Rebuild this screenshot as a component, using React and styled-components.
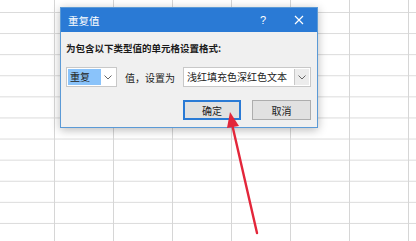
import React from "react";
import styled, { createGlobalStyle } from "styled-components";

const Global = createGlobalStyle`
    html, body {
        margin: 0;
        padding: 0;
        background: #ffffff;
    }
    body {
        font-family: "Noto Sans CJK SC", "Noto Sans", sans-serif;
    }
`;

const Sheet = styled.div`
    position: relative;
    width: 416px;
    height: 241px;
    overflow: hidden;
    background-color: #ffffff;
    background-image:
        linear-gradient(to right, #d6d6d6 1px, transparent 1px),
        linear-gradient(to bottom, #dadada 1px, transparent 1px);
    background-size: 59px 100%, 100% 21.1px;
    background-position: 54px 0, 0 12px;
`;

const Dialog = styled.div`
    position: absolute;
    left: 60px;
    top: 7px;
    width: 258px;
    height: 121px;
    box-sizing: border-box;
    border: 1px solid #5b9ad6;
    background: #f0f0f0;
    box-shadow: 0 2px 9px rgba(0, 0, 0, 0.28);
    display: flex;
    flex-direction: column;
`;

const TitleBar = styled.div`
    height: 24px;
    flex: none;
    background: #2a7ad5;
    color: #ffffff;
    display: flex;
    align-items: center;
    padding-left: 7px;
    font-size: 10.5px;
`;

const Title = styled.span`
    flex: 1;
`;

const TitleButton = styled.span`
    width: 36px;
    display: flex;
    justify-content: center;
    align-items: center;
    font-family: "Liberation Sans", sans-serif;
    font-size: 11px;
`;

const Body = styled.div`
    flex: 1;
    padding: 10px 6px 0 5px;
    display: flex;
    flex-direction: column;
`;

const Label = styled.div`
    font-size: 9.5px;
    font-weight: 700;
    color: #1a1a1a;
    line-height: 12px;
`;

const Row = styled.div`
    margin-top: 13px;
    display: flex;
    align-items: center;
`;

const Select = styled.div`
    width: ${(p) => p.$width}px;
    height: 20px;
    box-sizing: border-box;
    border: 1px solid #c8c8c8;
    background: #ffffff;
    display: flex;
    align-items: stretch;
    padding: 1px;
    font-size: 10px;
    color: #222222;
`;

const SelectValue = styled.span`
    flex: ${(p) => (p.$selected ? "none" : 1)};
    width: ${(p) => (p.$selected ? "31px" : "auto")};
    background: ${(p) => (p.$selected ? "#8ac3fa" : "transparent")};
    display: flex;
    align-items: center;
    padding-left: 2px;
    line-height: 1;
`;

const Arrow = styled.span`
    width: 15px;
    margin-left: auto;
    box-sizing: border-box;
    border-left: ${(p) => (p.$boxed ? "1px solid #c8c8c8" : "none")};
    background: ${(p) => (p.$boxed ? "#ececec" : "#ffffff")};
    display: flex;
    justify-content: center;
    align-items: center;
`;

const Text = styled.span`
    font-size: 10px;
    color: #222222;
    margin: 0 8px 0 8px;
    white-space: pre;
`;

const Buttons = styled.div`
    margin-top: 13px;
    display: flex;
    justify-content: flex-end;
    gap: 11px;
`;

const Button = styled.div`
    width: ${(p) => p.$width}px;
    height: 20px;
    box-sizing: border-box;
    border: ${(p) => (p.$primary ? "2px solid #2a7ad5" : "1px solid #adadad")};
    background: #e1e1e1;
    display: flex;
    justify-content: center;
    align-items: center;
    font-size: 10px;
    color: #222222;
`;

const Pointer = styled.svg`
    position: absolute;
    left: 0;
    top: 0;
`;

const Chevron = () => (
    <svg width="8" height="5" viewBox="0 0 8 5">
        <path d="M0.5 0.5 L4 4 L7.5 0.5" fill="none" stroke="#666" strokeWidth="1" />
    </svg>
);

const App = () => (
    <>
        <Global />
        <Sheet>
            <Dialog>
                <TitleBar>
                    <Title>重复值</Title>
                    <TitleButton>?</TitleButton>
                    <TitleButton>
                        <svg width="10" height="10" viewBox="0 0 10 10">
                            <path d="M1 1 L9 9 M9 1 L1 9" stroke="#fff" strokeWidth="1.2" />
                        </svg>
                    </TitleButton>
                </TitleBar>
                <Body>
                    <Label>为包含以下类型值的单元格设置格式:</Label>
                    <Row>
                        <Select $width={51}>
                            <SelectValue $selected>重复</SelectValue>
                            <Arrow><Chevron /></Arrow>
                        </Select>
                        <Text>值，设置为</Text>
                        <Select $width={130}>
                            <SelectValue>浅红填充色深红色文本</SelectValue>
                            <Arrow $boxed><Chevron /></Arrow>
                        </Select>
                    </Row>
                    <Buttons>
                        <Button $primary $width={58}>确定</Button>
                        <Button $width={59}>取消</Button>
                    </Buttons>
                </Body>
            </Dialog>
            <Pointer width="416" height="241" viewBox="0 0 416 241">
                <line x1="232" y1="124" x2="257" y2="233" stroke="#e3263a" strokeWidth="2.4" strokeLinecap="round" />
                <polygon points="230,112 239,126 227,128" fill="#e3263a" />
            </Pointer>
        </Sheet>
    </>
);

export default App;
